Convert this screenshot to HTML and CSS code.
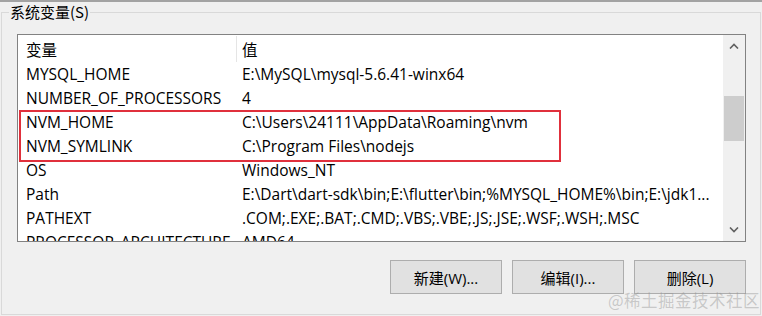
FILE: index.html
```html
<!DOCTYPE html>
<html lang="zh-CN">
<head>
<meta charset="utf-8">
<title>系统变量</title>
<link rel="stylesheet" href="styles.css">
</head>
<body>
<div class="topline"></div>
<fieldset class="group">
  <legend class="group-label">系统变量(S)</legend>
  <div class="listview">
    <div class="list-main">
      <div class="row header">
        <div class="cell c1">变量</div>
        <div class="sep"></div>
        <div class="cell c2">值</div>
      </div>
      <div class="row"><div class="cell c1">MYSQL_HOME</div><div class="cell c2">E:\MySQL\mysql-5.6.41-winx64</div></div>
      <div class="row"><div class="cell c1">NUMBER_OF_PROCESSORS</div><div class="cell c2">4</div></div>
      <div class="row"><div class="cell c1">NVM_HOME</div><div class="cell c2">C:\Users\24111\AppData\Roaming\nvm</div></div>
      <div class="row"><div class="cell c1">NVM_SYMLINK</div><div class="cell c2">C:\Program Files\nodejs</div></div>
      <div class="row"><div class="cell c1">OS</div><div class="cell c2">Windows_NT</div></div>
      <div class="row"><div class="cell c1">Path</div><div class="cell c2">E:\Dart\dart-sdk\bin;E:\flutter\bin;%MYSQL_HOME%\bin;E:\jdk1...</div></div>
      <div class="row"><div class="cell c1">PATHEXT</div><div class="cell c2">.COM;.EXE;.BAT;.CMD;.VBS;.VBE;.JS;.JSE;.WSF;.WSH;.MSC</div></div>
      <div class="row"><div class="cell c1">PROCESSOR_ARCHITECTURE</div><div class="cell c2">AMD64</div></div>
      <div class="highlight"></div>
    </div>
    <div class="scrollbar">
      <div class="arrow">
        <svg width="10" height="6" viewBox="0 0 10 6"><polyline points="1,5.5 5,1.5 9,5.5" fill="none" stroke="#606060" stroke-width="1.6"/></svg>
      </div>
      <div class="track">
        <div class="thumb"></div>
      </div>
      <div class="arrow">
        <svg width="10" height="6" viewBox="0 0 10 6"><polyline points="1,0.5 5,4.5 9,0.5" fill="none" stroke="#606060" stroke-width="1.6"/></svg>
      </div>
    </div>
  </div>
  <div class="buttons">
    <button class="btn">新建(W)...</button>
    <button class="btn">编辑(I)...</button>
    <button class="btn">删除(L)</button>
  </div>
  <div class="watermark">@稀土掘金技术社区</div>
</fieldset>
</body>
</html>
```

FILE: styles.css
```css
* { box-sizing: border-box; }
html, body {
  margin: 0;
  padding: 0;
  background: #f0f0f0;
  width: 762px;
  height: 316px;
  overflow: hidden;
  font-family: "Open Sans", "Noto Sans CJK SC", sans-serif;
  font-size: 15.5px;
  color: #000;
}
.topline {
  height: 2px;
  background: #a3a3a3;
}
.group {
  position: relative;
  margin: 0 1px;
  border: 1px solid #d9d9d9;
  padding: 0 14px 20px 15px;
  min-width: 0;
}
.group-label {
  margin-left: -8px;
  padding: 0 1px;
  line-height: 20px;
  font-family: "Noto Sans CJK SC", sans-serif;
  font-size: 15px;
  color: #000;
}
.listview {
  margin-top: 12px;
  height: 208px;
  border: 1px solid #828282;
  background: #fff;
  display: flex;
  overflow: hidden;
}
.list-main {
  position: relative;
  flex: 1;
  overflow: hidden;
}
.row {
  display: flex;
  height: 24px;
  align-items: center;
  white-space: nowrap;
}
.row.header {
  height: 27px;
  padding-top: 1px;
}
.c1 {
  width: 218px;
  flex: none;
  padding-left: 8px;
}
.c2 {
  padding-left: 6px;
}
.sep {
  width: 1px;
  height: 26px;
  align-self: flex-start;
  background: #e5e5e5;
  flex: none;
}
.header .c2 {
  padding-left: 5px;
}
.highlight {
  position: absolute;
  left: 1px;
  top: 75px;
  width: 542px;
  height: 52px;
  border: 2px solid #e0303c;
}
.scrollbar {
  width: 22px;
  flex: none;
  background: #f0f0f0;
  display: flex;
  flex-direction: column;
}
.arrow {
  height: 22px;
  display: flex;
  align-items: center;
  justify-content: center;
  flex: none;
}
.track {
  flex: 1;
  padding: 39px 1px 0 1px;
}
.thumb {
  height: 45px;
  background: #cdcdcd;
}
.buttons {
  display: flex;
  justify-content: flex-end;
  gap: 10px;
  margin-top: 18px;
}
.btn {
  width: 112px;
  height: 34px;
  background: #e1e1e1;
  border: 1px solid #adadad;
  font-family: "Open Sans", "Noto Sans CJK SC", sans-serif;
  font-size: 15px;
  color: #000;
  padding: 0;
}
.watermark {
  position: absolute;
  right: 0;
  bottom: 2px;
  font-family: "Noto Sans CJK SC", sans-serif;
  font-size: 16.5px;
  color: rgba(150, 150, 150, 0.45);
  letter-spacing: 0.5px;
}
```
